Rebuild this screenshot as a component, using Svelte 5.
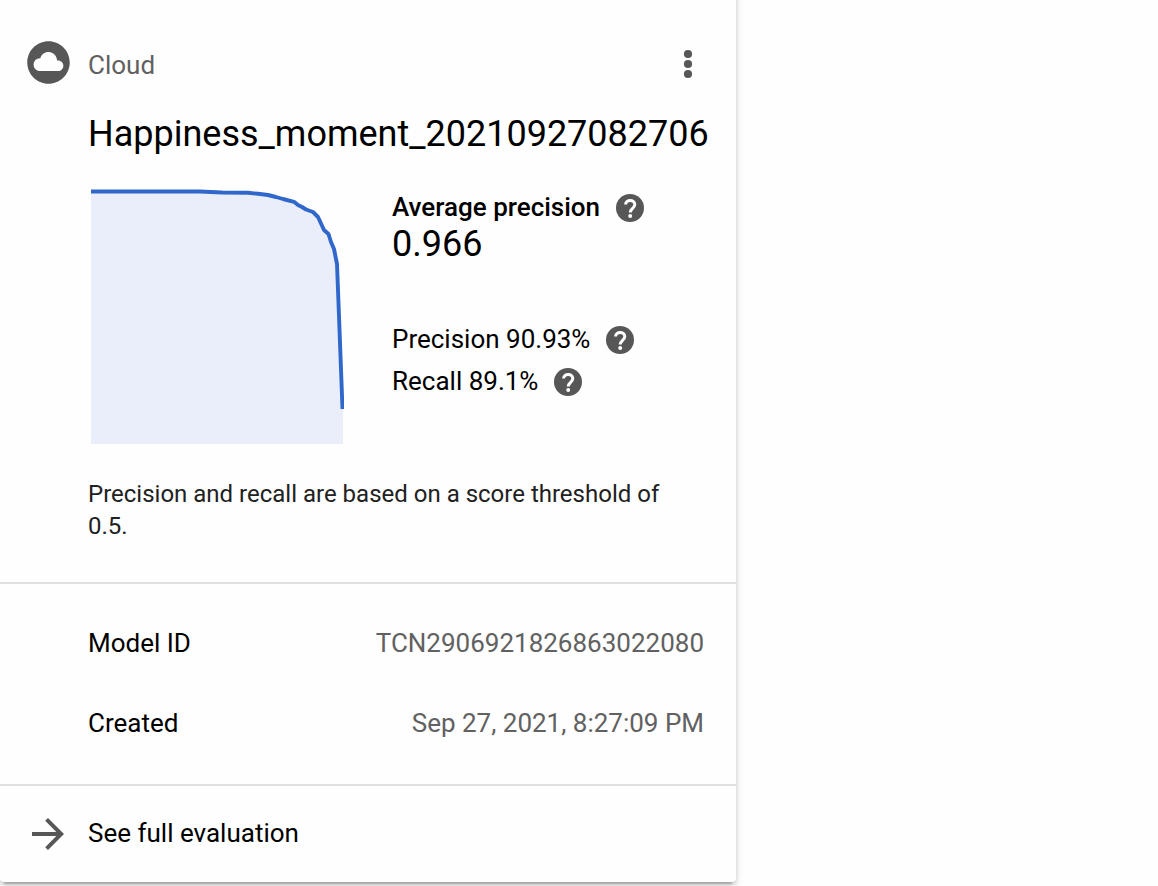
<main class="page">
  <article class="card">
    <header class="source">
      <svg class="cloud" viewBox="0 0 24 24"><path d="M12 2C6.480 2 2 6.480 2 12s4.480 10 10 10 10-4.480 10-10S17.520 2 12 2zm4.500 14H8c-1.660 0-3-1.340-3-3s1.340-3 3-3l.14.01C8.580 8.280 10.130 7 12 7c2.210 0 4 1.790 4 4h.5c1.380 0 2.500 1.120 2.500 2.500S17.880 16 16.500 16z" /></svg>
      <span class="grey">Cloud</span>
      <svg class="more" viewBox="0 0 10 30"><circle cx="5" cy="5" r="4.100" /><circle cx="5" cy="15" r="4.100" /><circle cx="5" cy="25" r="4.100" /></svg>
    </header>
    <h1>Happiness_moment_20210927082706</h1>
    <section class="summary">
      <svg class="chart" viewBox="0 0 256 258">
        <path class="area" d="M3 3.500H115L160 5L178 7L206 15L230 29L240 47L249 77L255 221V256H3Z" />
        <path class="curve" d={curve} />
      </svg>
      <div class="metrics">
        <div class="metric strong"><span>Average precision</span>{@render help()}</div>
        <div class="score">0.966</div>
        <div class="metric precision"><span>Precision 90.93%</span>{@render help()}</div>
        <div class="metric"><span>Recall 89.1%</span>{@render help()}</div>
      </div>
    </section>
    <p>Precision and recall are based on a score threshold of 0.5.</p>
    <dl>
      <div><dt>Model ID</dt><dd>TCN2906921826863022080</dd></div>
      <div><dt>Created</dt><dd>Sep 27, 2021, 8:27:09 PM</dd></div>
    </dl>
    <footer>
      <svg class="arrow" viewBox="4 4 16 16"><path d="M12 4l-1.410 1.410L16.170 11H4v2h12.170l-5.580 5.590L12 20l8-8z" /></svg>
      <span>See full evaluation</span>
    </footer>
  </article>
</main>

{#snippet help()}
  <svg class="help" viewBox="0 0 28 28">
    <circle cx="14" cy="14" r="14" />
    <path class="mark" d="M9.600 10.600C9.600 8.100 11.600 6.500 14.200 6.500s4.600 1.600 4.600 4.100c0 3.500-4.600 4-4.600 7.900" />
    <circle class="dot" cx="14.200" cy="22.100" r="2" />
  </svg>
{/snippet}

<script>
  const curve = 'M3 3.500H112L134 4.500L160 4.800L170 5.800L180 7L188 9L195 11L206 13.800L210 17L214 19L218 21.500L225 24L230 29L236 42L240.500 46L243 54L246 61L249 76L250.500 115L254.500 221';
</script>

<style>
  :global(body) { margin: 0; background: #fefefe; }
  .page { height: 886px; overflow: hidden; }
  .card { box-sizing: border-box; width: 736px; height: 892px; margin-top: -10px; padding-top: 10px; font: 26px/32px Roboto, sans-serif; color: #000; background: #fefefe; border-radius: 0 0 4px 4px; box-shadow: 0 6px 2px -4px #0003, 0 3px 4px #00000024, 0 2px 10px #0000001f; display: flex; flex-direction: column; }
  svg { display: block; flex: none; fill: #575757; }
  .source { display: flex; align-items: center; height: 50px; padding: 38px 43px 0 22px; }
  .cloud { width: 51px; height: 51px; margin: 0 1px 2px 0.500px; }
  .source span { margin: 4px 0 0 13.500px; }
  .more { width: 10px; height: 30px; margin: 2px 0 0 auto; }
  .grey, dd { color: #616161; }
  h1 { margin: 24px 0 0 88px; font-size: 36px; line-height: 44px; font-weight: 400; white-space: nowrap; }
  .summary { display: flex; height: 258px; margin: 32px 0 0 88px; }
  .chart { width: 256px; height: 258px; }
  .area { fill: #eaeefa; }
  .curve { fill: none; stroke: #2f67cb; stroke-width: 3.900; stroke-linejoin: round; }
  .metrics { margin-left: 48px; padding-top: 4px; }
  .metric { display: flex; align-items: center; height: 32px; white-space: nowrap; }
  .metric span { margin-bottom: 2px; }
  .strong { font-weight: 500; }
  .help { width: 28px; height: 28px; margin-left: 16px; }
  .mark { fill: none; stroke: #fefefe; stroke-width: 3; }
  .dot { fill: #fefefe; }
  .score { font-size: 36px; line-height: 40px; margin-bottom: 60px; }
  .precision { margin-bottom: 10px; }
  p { margin: 32px 60px 0 88px; font-size: 24px; color: #212121; height: 104px; }
  dl { margin: 0; height: 200px; border-top: 2px solid #e0e0e0; border-bottom: 2px solid #e0e0e0; }
  dl div { display: flex; justify-content: space-between; padding: 0 32px 0 88px; height: 80px; }
  dl div:first-child { padding-top: 43px; height: 80px; }
  dd { margin: 0; }
  footer { display: flex; align-items: center; height: 96px; padding-left: 32px; }
  footer span { margin: 0 0 2px 24px; }
  .arrow { width: 32px; height: 32px; }
</style>
